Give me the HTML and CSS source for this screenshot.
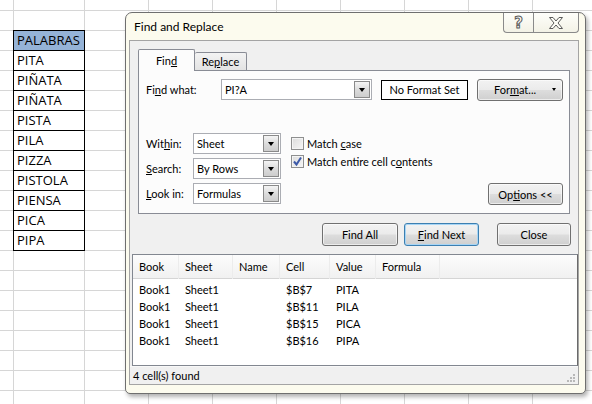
FILE: index.html
```html
<!DOCTYPE html>
<html>
<head>
	<meta charset="utf-8">
	<meta name="viewport" content="width=device-width"/>
	<link rel="stylesheet" href="styles.css">
</head>
<body>
<div class="sheet">
	<div class="col cola"></div>
	<div class="col colb">
		<table class="words">
			<tr><td class="head">PALABRAS</td></tr>
			<tr><td>PITA</td></tr>
			<tr><td>PIÑATA</td></tr>
			<tr><td>PIÑATA</td></tr>
			<tr><td>PISTA</td></tr>
			<tr><td>PILA</td></tr>
			<tr><td>PIZZA</td></tr>
			<tr><td>PISTOLA</td></tr>
			<tr><td>PIENSA</td></tr>
			<tr><td>PICA</td></tr>
			<tr><td>PIPA</td></tr>
		</table>
	</div>
	<div class="col"></div>
	<div class="col"></div>
	<div class="col"></div>
	<div class="col"></div>
	<div class="col"></div>
	<div class="col"></div>
	<div class="col"></div>
	<div class="col"></div>
</div>

<div class="dialog">
	<div class="titlebar">
		<span class="title">Find and Replace</span>
		<div class="capbtns">
			<span class="capbtn help">?</span>
			<span class="capbtn close">
				<svg width="16" height="14" viewBox="0 0 16 14">
					<polygon points="1.5,1.5 5,1.5 8,5 11,1.5 14.5,1.5 10,7 14.5,12.5 11,12.5 8,9 5,12.5 1.5,12.5 6,7" fill="#fdfdf6" stroke="#5a5a5a" stroke-width="1"/>
				</svg>
			</span>
		</div>
	</div>
	<div class="client">
		<div class="tabs">
			<span class="tab on">Fin<u>d</u></span>
			<span class="tab">Re<u>p</u>lace</span>
		</div>
		<div class="panel">
			<div class="findrow">
				<span class="lbl wide">Fi<u>n</u>d what:</span>
				<div class="combo long"><span class="val">PI?A</span><span class="drop"></span></div>
				<div class="fmtset">No Format Set</div>
				<div class="btn fmtbtn"><span>For<u>m</u>at...</span><span class="tri"></span></div>
			</div>
			<div class="opts">
				<div class="selects">
					<span class="lbl">Wit<u>h</u>in:</span>
					<div class="combo"><span class="val">Sheet</span><span class="drop"></span></div>
					<span class="lbl"><u>S</u>earch:</span>
					<div class="combo"><span class="val">By Rows</span><span class="drop"></span></div>
					<span class="lbl"><u>L</u>ook in:</span>
					<div class="combo"><span class="val">Formulas</span><span class="drop"></span></div>
				</div>
				<div class="checks">
					<label class="check"><span class="box"></span><span>Match <u>c</u>ase</span></label>
					<label class="check"><span class="box">
						<svg width="11" height="11" viewBox="0 0 11 11"><path d="M2 5.5 L4.5 8.5 L9 1.5" fill="none" stroke="#3d5aa8" stroke-width="2"/></svg>
					</span><span>Match entire cell c<u>o</u>ntents</span></label>
				</div>
				<div class="btn optbtn"><span>Op<u>t</u>ions &lt;&lt;</span></div>
			</div>
		</div>
		<div class="actions">
			<div class="btn"><span>Find All</span></div>
			<div class="btn default"><span><u>F</u>ind Next</span></div>
			<div class="btn closebtn"><span>Close</span></div>
		</div>
		<div class="results">
			<div class="rhead">
				<span class="c1">Book</span><span class="c2">Sheet</span><span class="c3">Name</span><span class="c4">Cell</span><span class="c5">Value</span><span class="c6">Formula</span>
			</div>
			<div class="rrow"><span class="c1">Book1</span><span class="c2">Sheet1</span><span class="c3"></span><span class="c4">$B$7</span><span class="c5">PITA</span></div>
			<div class="rrow"><span class="c1">Book1</span><span class="c2">Sheet1</span><span class="c3"></span><span class="c4">$B$11</span><span class="c5">PILA</span></div>
			<div class="rrow"><span class="c1">Book1</span><span class="c2">Sheet1</span><span class="c3"></span><span class="c4">$B$15</span><span class="c5">PICA</span></div>
			<div class="rrow"><span class="c1">Book1</span><span class="c2">Sheet1</span><span class="c3"></span><span class="c4">$B$16</span><span class="c5">PIPA</span></div>
		</div>
		<div class="status">
			<span>4 cell(s) found</span>
			<svg class="grip" width="10" height="10" viewBox="0 0 10 10">
				<rect x="7" y="1" width="2" height="2" fill="#b8b8b8"/>
				<rect x="4" y="4" width="2" height="2" fill="#b8b8b8"/>
				<rect x="7" y="4" width="2" height="2" fill="#b8b8b8"/>
				<rect x="1" y="7" width="2" height="2" fill="#b8b8b8"/>
				<rect x="4" y="7" width="2" height="2" fill="#b8b8b8"/>
				<rect x="7" y="7" width="2" height="2" fill="#b8b8b8"/>
			</svg>
		</div>
	</div>
</div>
</body>
</html>
```

FILE: styles.css
```css
* {
	padding: 0;
	margin: 0;
	box-sizing: border-box;
}

body {
	width: 592px;
	height: 404px;
	overflow: hidden;
	background: #fff;
	font-family: Lato, "Noto Sans", sans-serif;
}

/* spreadsheet behind the dialog */
.sheet {
	display: flex;
	height: 404px;
	background-image: linear-gradient(#d6d6d6 1px, transparent 1px);
	background-size: 100% 20px;
	background-position: 0 10px;
}

.col {
	flex: none;
	width: 64px;
	border-right: 1px solid #d6d6d6;
}

.cola {
	width: 14px;
}

.colb {
	width: 71px;
}

.words {
	margin: 30px 0 0 -1px;
	width: 72px;
	border-collapse: separate;
	border-spacing: 0;
	border-top: 1px solid #000;
	border-left: 1px solid #000;
	font-family: "Open Sans", sans-serif;
	font-size: 13px;
	background: #fff;
}

.words td {
	height: 20px;
	line-height: 19px;
	padding: 0 3px;
	border-right: 1px solid #000;
	border-bottom: 1px solid #000;
	white-space: nowrap;
}

.words td.head {
	background: #95b3d7;
}

/* dialog window */
.dialog {
	position: absolute;
	left: 125px;
	top: 12px;
	width: 461px;
	height: 382px;
	border: 1px solid #6f6f6f;
	border-radius: 7px 7px 5px 5px;
	background: #fcfbee;
	padding: 0 6px 8px 3px;
	display: flex;
	flex-direction: column;
	box-shadow: 2px 3px 4px rgba(0, 0, 0, .3);
	font-size: 11px;
	color: #000;
}

.titlebar {
	height: 27px;
	display: flex;
	justify-content: space-between;
	align-items: flex-start;
	flex: none;
}

.title {
	padding-left: 5px;
	line-height: 28px;
	font-size: 12px;
}

.capbtns {
	display: flex;
}

.capbtn {
	height: 20px;
	border: 1px solid #8a8a8a;
	border-top: none;
	background: linear-gradient(#fefefa, #f3f2e6);
	display: flex;
	align-items: center;
	justify-content: center;
}

.help {
	width: 30px;
	border-right: none;
	border-bottom-left-radius: 4px;
	font-family: "DejaVu Sans", sans-serif;
	font-weight: bold;
	font-size: 15px;
	color: #fdfdf6;
	-webkit-text-stroke: 1px #5a5a5a;
}

.close {
	width: 46px;
	border-bottom-right-radius: 4px;
}

.client {
	width: 450px;
	height: 345px;
	flex: none;
	border: 1px solid #a4a4a4;
	background: #f0f0f0;
	display: flex;
	flex-direction: column;
}

.tabs {
	display: flex;
	align-items: flex-end;
	height: 21px;
	margin: 8px 0 0 8px;
}

.tab {
	height: 18px;
	padding: 0 6px;
	border: 1px solid #898c95;
	border-bottom: none;
	background: linear-gradient(#f3f3f3, #e3e3e3);
	line-height: 17px;
	border-radius: 2px 2px 0 0;
}

.tab.on {
	width: 57px;
	height: 22px;
	margin-bottom: -1px;
	background: #fcfcfc;
	position: relative;
	text-align: center;
	line-height: 21px;
}

.tab:not(.on) {
	width: 52px;
	border-left: none;
	text-align: center;
}

.panel {
	width: 432px;
	height: 144px;
	margin-left: 8px;
	border: 1px solid #898c95;
	background: #fcfcfc;
	padding: 8px 6px 0 7px;
}

.findrow {
	display: flex;
	align-items: center;
	height: 21px;
}

.lbl {
	line-height: 21px;
	white-space: nowrap;
}

.lbl.wide {
	width: 75px;
}

.combo {
	height: 21px;
	border: 1px solid #abadb3;
	background: #fff;
	display: flex;
	align-items: center;
	justify-content: space-between;
	padding: 0 1px 0 3px;
}

.combo.long {
	width: 151px;
}

.drop {
	width: 16px;
	height: 17px;
	border: 1px solid #8a8a8a;
	background: linear-gradient(#f4f4f4, #dcdcdc 50%, #cdcdcd);
	display: flex;
	align-items: center;
	justify-content: center;
}

.drop::after,
.tri::after {
	content: "";
	border-left: 3.5px solid transparent;
	border-right: 3.5px solid transparent;
	border-top: 4px solid #000;
}

.fmtset {
	width: 87px;
	height: 20px;
	margin-left: 9px;
	border: 1px solid #000;
	background: #fff;
	text-align: center;
	line-height: 18px;
}

.btn {
	height: 22px;
	border: 1px solid #707070;
	border-radius: 3px;
	background: linear-gradient(#f2f2f2, #ebebeb 48%, #dddddd 52%, #cfcfcf);
	box-shadow: inset 0 0 0 1px rgba(255, 255, 255, .6);
	display: flex;
	align-items: center;
	justify-content: center;
	white-space: nowrap;
}

.fmtbtn {
	width: 86px;
	margin-left: 9px;
	gap: 16px;
	padding-left: 10px;
}

.tri {
	display: flex;
}

.tri::after {
	border-left-width: 2.5px;
	border-right-width: 2.5px;
	border-top-width: 3px;
}

.opts {
	display: flex;
	align-items: flex-end;
	margin-top: 33px;
}

.selects {
	display: grid;
	grid-template-columns: 47px 88px;
	row-gap: 4px;
}

.selects .combo {
	padding-right: 1px;
}

.checks {
	align-self: flex-start;
	margin-left: 10px;
	padding-top: 2px;
	display: flex;
	flex-direction: column;
	gap: 2px;
}

.check {
	display: flex;
	align-items: center;
	height: 16px;
	gap: 3px;
	white-space: nowrap;
}

.box {
	width: 13px;
	height: 13px;
	border: 1px solid #8e8f8f;
	background: linear-gradient(135deg, #dcdcdc, #f6f6f6);
	box-shadow: inset 0 0 0 1px #f4f4f4;
	display: flex;
	align-items: center;
	justify-content: center;
}

.optbtn {
	width: 75px;
	margin-left: auto;
	margin-bottom: -1px;
}

.actions {
	display: flex;
	justify-content: flex-end;
	margin: 9px 7px 0 0;
}

.actions .btn {
	width: 76px;
	height: 23px;
	margin-left: 6px;
}

.actions .default {
	border-color: #3c7fb1;
	box-shadow: inset 0 0 0 1px #a7d5f5;
	width: 75px;
}

.actions .closebtn {
	margin-left: 18px;
	width: 74px;
}

.results {
	height: 112px;
	margin: 8px 0 0 2px;
	border: 1px solid #828790;
	border-right-color: #6a6a6a;
	background: #fff;
}

.rhead {
	height: 24px;
	display: flex;
	align-items: center;
	background: linear-gradient(#fcfcfc, #f1f1f1);
	border-bottom: 1px solid #d5d5d5;
	margin-bottom: 2px;
}

.rhead span {
	height: 24px;
	line-height: 23px;
	border-right: 1px solid #ececec;
}

.rrow {
	display: flex;
	height: 17px;
	line-height: 17px;
}

.c1, .c2, .c3, .c4, .c5, .c6 {
	padding-left: 6px;
	flex: none;
}

.c1 { width: 46px; }
.c2 { width: 54px; }
.c3 { width: 47px; }
.c4 { width: 50px; }
.c5 { width: 46px; }
.c6 { width: 64px; }

.status {
	flex: 1;
	display: flex;
	justify-content: space-between;
	align-items: center;
	padding: 0 2px 0 3px;
	border-top: 1px solid #f8f8f8;
}

.grip {
	align-self: flex-end;
	margin-bottom: 1px;
}
```
